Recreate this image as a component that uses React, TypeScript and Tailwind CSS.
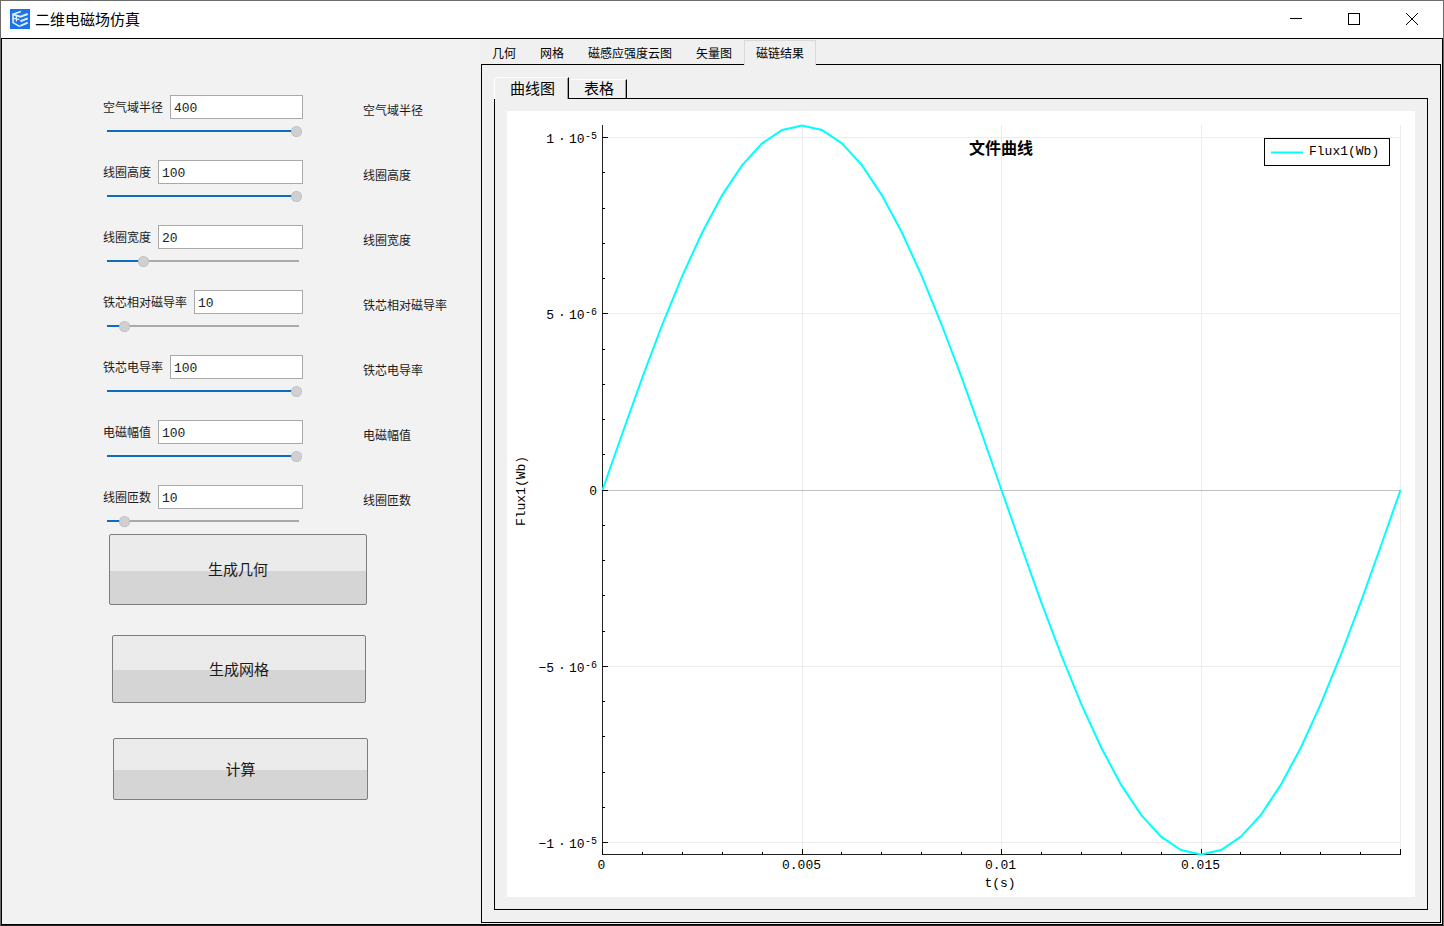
import { useState } from 'react';

const uiFont = 'font-["Noto_Sans_CJK_SC",sans-serif]';

type Param = { label: string; value: number; min: number; max: number };

const params: Param[] = [
  { label: '空气域半径', value: 400, min: 4, max: 400 },
  { label: '线圈高度', value: 100, min: 4, max: 100 },
  { label: '线圈宽度', value: 20, min: 4, max: 100 },
  { label: '铁芯相对磁导率', value: 10, min: 4, max: 100 },
  { label: '铁芯电导率', value: 100, min: 4, max: 100 },
  { label: '电磁幅值', value: 100, min: 4, max: 100 },
  { label: '线圈匝数', value: 10, min: 4, max: 100 },
];

function Logo() {
  return (
    <svg width="20" height="20" viewBox="0 0 20 20" aria-hidden="true">
      <rect width="20" height="20" fill="#1a73e8" />
      <g fill="none" stroke="#e3eefd">
        <path d="M2.2 5.6L11 2.4" strokeWidth="1.6" />
        <path d="M3 5V13.6L10 17.6" strokeWidth="1.6" />
        <path d="M3 9.2L9.4 10.6M6.4 6V12.6" strokeWidth="1.3" />
        <path d="M3 5.4L10.4 7.6L17.8 5M10.4 12.2L17.8 9.4M10.4 16.8L17.8 13.6" strokeWidth="2" />
      </g>
    </svg>
  );
}

function TitleBar() {
  return (
    <header className="flex h-[37px] shrink-0 items-center bg-white pb-px pl-[9px] pr-0.5">
      <Logo />
      <h1 className="ml-[5px] text-[15px] leading-5 text-black">二维电磁场仿真</h1>
      <div className="ml-auto flex h-full">
        <button aria-label="最小化" className="flex w-[58px] items-center justify-center">
          <svg width="12" height="12" viewBox="0 0 12 12" stroke="#000" fill="none">
            <path d="M0 5.5H12" />
          </svg>
        </button>
        <button aria-label="最大化" className="flex w-[58px] items-center justify-center">
          <svg width="12" height="12" viewBox="0 0 12 12" stroke="#000" fill="none">
            <rect x="0.5" y="0.5" width="11" height="11" />
          </svg>
        </button>
        <button aria-label="关闭" className="flex w-[58px] items-center justify-center">
          <svg width="12" height="12" viewBox="0 0 12 12" stroke="#000" fill="none">
            <path d="M0 0L12 12M12 0L0 12" />
          </svg>
        </button>
      </div>
    </header>
  );
}

function ParamRow({ label, value: initial, min, max }: Param) {
  const [value, setValue] = useState(initial);
  const ratio = Math.min(1, Math.max(0, (value - min) / (max - min)));
  const fill = 6 + ratio * 183;
  const id = `param-${label}`;
  return (
    <div className="flex gap-[60px]">
      <div className="w-[200px] shrink-0">
        <div className="flex h-6 items-center gap-[7px]">
          <label htmlFor={id} className="whitespace-nowrap text-xs text-[#1a1a1a]">
            {label}
          </label>
          <input
            id={id}
            type="text"
            value={value}
            onChange={(e) => setValue(Number(e.target.value) || 0)}
            className='h-6 min-w-0 flex-1 border border-[#a9a9a9] bg-white px-[3px] pt-0.5 font-["Liberation_Mono",monospace] text-[13px] leading-5 text-[#222] outline-none'
          />
        </div>
        <input
          type="range"
          aria-label={label}
          min={min}
          max={max}
          value={value}
          onChange={(e) => setValue(Number(e.target.value))}
          className="ml-1 mt-1.5 block h-3 w-[195px] appearance-none bg-[length:100%_2px] bg-center bg-no-repeat [&::-webkit-slider-thumb]:size-[11px] [&::-webkit-slider-thumb]:appearance-none [&::-webkit-slider-thumb]:rounded-full [&::-webkit-slider-thumb]:border [&::-webkit-slider-thumb]:border-dotted [&::-webkit-slider-thumb]:border-[#b0b0b0] [&::-webkit-slider-thumb]:bg-[#d0d0d0]"
          style={{
            backgroundImage: `linear-gradient(to right, #0f6cbd ${fill}px, #aaaaaa ${fill}px, #aaaaaa 192px, transparent 192px)`,
          }}
        />
      </div>
      <span className="mt-1.5 whitespace-nowrap text-xs leading-[18px] text-[#1a1a1a]">{label}</span>
    </div>
  );
}

const actionClass =
  'block rounded-[2px] border border-[#7d7d7d] bg-linear-to-b from-[#ebebeb] from-52% to-[#d5d5d5] to-52% text-[15px] text-[#1a1a1a]';

function ParamPanel() {
  return (
    <section className="w-[478px] shrink-0 bg-[#f2f2f2] pl-[101px] pt-14">
      <form onSubmit={(e) => e.preventDefault()}>
        <div className="flex flex-col gap-[23px]">
          {params.map((p) => (
            <ParamRow key={p.label} {...p} />
          ))}
        </div>
        <div className="flex flex-col pl-1.5 pt-[7px]">
          <button type="button" className={`${actionClass} h-[71px] w-[258px]`}>生成几何</button>
          <button type="button" className={`${actionClass} ml-[3px] mt-[30px] h-[68px] w-[254px]`}>生成网格</button>
          <button type="button" className={`${actionClass} ml-1 mt-[35px] h-[62px] w-[255px]`}>计算</button>
        </div>
      </form>
    </section>
  );
}

const plot = { left: 95.5, right: 893.5, top: 14, bottom: 743.5, zero: 379.5, amp: 364.5, unit: 35.25 };

const curve = Array.from({ length: 41 }, (_, i) => {
  const x = plot.left + ((plot.right - plot.left) * i) / 40;
  const y = plot.zero - 0.5 - plot.amp * Math.sin((Math.PI * i) / 20);
  return `${x.toFixed(1)},${y.toFixed(1)}`;
}).join(' ');

const yTicks = Array.from({ length: 21 }, (_, i) => i - 10);
const xTicks = Array.from({ length: 21 }, (_, i) => i);
const yAt = (n: number) => Math.floor(plot.zero - 0.5 - n * plot.unit) + 0.5;
const xAt = (n: number) => Math.floor(plot.left + (n * (plot.right - plot.left)) / 20) + 0.5;

const yLabels = [
  { n: 10, digit: '1', exp: '-5' },
  { n: 5, digit: '5', exp: '-6' },
  { n: -5, digit: '−5', exp: '-6' },
  { n: -10, digit: '−1', exp: '-5' },
];
const xLabels = [
  { n: 0, text: '0' },
  { n: 5, text: '0.005' },
  { n: 10, text: '0.01' },
  { n: 15, text: '0.015' },
];

function FluxChart() {
  return (
    <svg
      viewBox="0 0 908 786"
      role="img"
      aria-label="文件曲线"
      className='block size-full bg-white font-["Liberation_Mono",monospace] text-[13px]'
    >
      <g stroke="#ececec">
        {[5, 10, 15, 20].map((n) => (
          <line key={n} x1={xAt(n)} x2={xAt(n)} y1={plot.top} y2={plot.bottom} />
        ))}
        {[-10, -5, 5, 10].map((n) => (
          <line key={n} x1={plot.left} x2={plot.right} y1={yAt(n)} y2={yAt(n)} />
        ))}
      </g>
      <line x1={plot.left} x2={plot.right} y1={plot.zero} y2={plot.zero} stroke="#c0c0c0" />
      <path d={`M${plot.left} ${plot.top}V${plot.bottom}H${plot.right + 0.5}`} fill="none" stroke="#222" />
      <g stroke="#000">
        {yTicks.map((n) => (
          <line key={n} x1={95} x2={n % 5 === 0 ? 101 : 98} y1={yAt(n)} y2={yAt(n)} />
        ))}
        {xTicks.map((n) => (
          <line key={n} x1={xAt(n)} x2={xAt(n)} y1={744} y2={n % 5 === 0 ? 738 : 741} />
        ))}
      </g>
      <polyline points={curve} fill="none" stroke="#00ffff" strokeWidth="2" />
      <g fill="#000">
        {yLabels.map(({ n, digit, exp }) => (
          <g key={n}>
            <text x="47" y={yAt(n) + 5} textAnchor="end">{digit}</text>
            <text x="55" y={yAt(n) + 5} textAnchor="middle">·</text>
            <text x="62" y={yAt(n) + 5}>10</text>
            <text x="78" y={yAt(n) + 1} className="text-[10px]">{exp}</text>
          </g>
        ))}
        <text x="90" y={plot.zero + 4} textAnchor="end">0</text>
        {xLabels.map(({ n, text }) => (
          <text key={n} x={xAt(n) - 1} y="758" textAnchor="middle">{text}</text>
        ))}
        <text x="493" y="776" textAnchor="middle">t(s)</text>
        <text transform="translate(18 380) rotate(-90)" textAnchor="middle">Flux1(Wb)</text>
        <text x="494" y="43" textAnchor="middle" className='font-["Noto_Sans_CJK_SC",sans-serif] text-base font-bold'>
          文件曲线
        </text>
      </g>
      <rect x="757.5" y="27.5" width="125" height="27" fill="#fff" stroke="#000" />
      <line x1="764" x2="796" y1="41.5" y2="41.5" stroke="#00ffff" strokeWidth="2" />
      <text x="802" y="44">Flux1(Wb)</text>
    </svg>
  );
}

const outerTabs = ['几何', '网格', '磁感应强度云图', '矢量图', '磁链结果'];

function ResultPanel() {
  return (
    <section className="flex min-w-0 flex-1 flex-col bg-[#f0f0f0] pb-px pr-px pt-px">
      <div role="tablist" className="flex h-6 shrink-0">
        {outerTabs.map((t) => {
          const active = t === '磁链结果';
          return (
            <button
              key={t}
              role="tab"
              aria-selected={active}
              className={
                active
                  ? 'relative z-10 -mb-px border border-b-0 border-[#d9d9d9] bg-[#f0f0f0] px-[11px] text-xs text-black'
                  : 'px-3 pt-0.5 text-xs text-black'
              }
            >
              {t}
            </button>
          );
        })}
      </div>
      <div className="ml-px flex min-h-0 flex-1 flex-col border border-black p-3">
        <div role="tablist" className="flex h-[21px] shrink-0 items-end">
          <button
            role="tab"
            aria-selected="true"
            className="relative z-10 -mb-px h-[22px] w-[75px] rounded-tl-sm border-l border-r border-t border-l-white border-r-black border-t-white bg-[#f0f0f0] pb-0.5 pl-0.5 text-[15px] leading-[18px] text-black shadow-[inset_-1px_0_#a0a0a0]"
          >
            曲线图
          </button>
          <button
            role="tab"
            aria-selected="false"
            className="h-[19px] w-[58px] rounded-tl-sm border-r border-t border-r-black border-t-white pb-0.5 pl-[3px] text-[15px] leading-4 text-black shadow-[inset_-1px_0_#a0a0a0]"
          >
            表格
          </button>
        </div>
        <div className="min-h-0 flex-1 border border-black p-3">
          <FluxChart />
        </div>
      </div>
    </section>
  );
}

export default function App() {
  return (
    <div className={`${uiFont} flex h-screen flex-col border border-[#6b6b6b] border-b-[#222] bg-white`}>
      <TitleBar />
      <main className="flex min-h-0 flex-1 border border-black">
        <ParamPanel />
        <ResultPanel />
      </main>
    </div>
  );
}
